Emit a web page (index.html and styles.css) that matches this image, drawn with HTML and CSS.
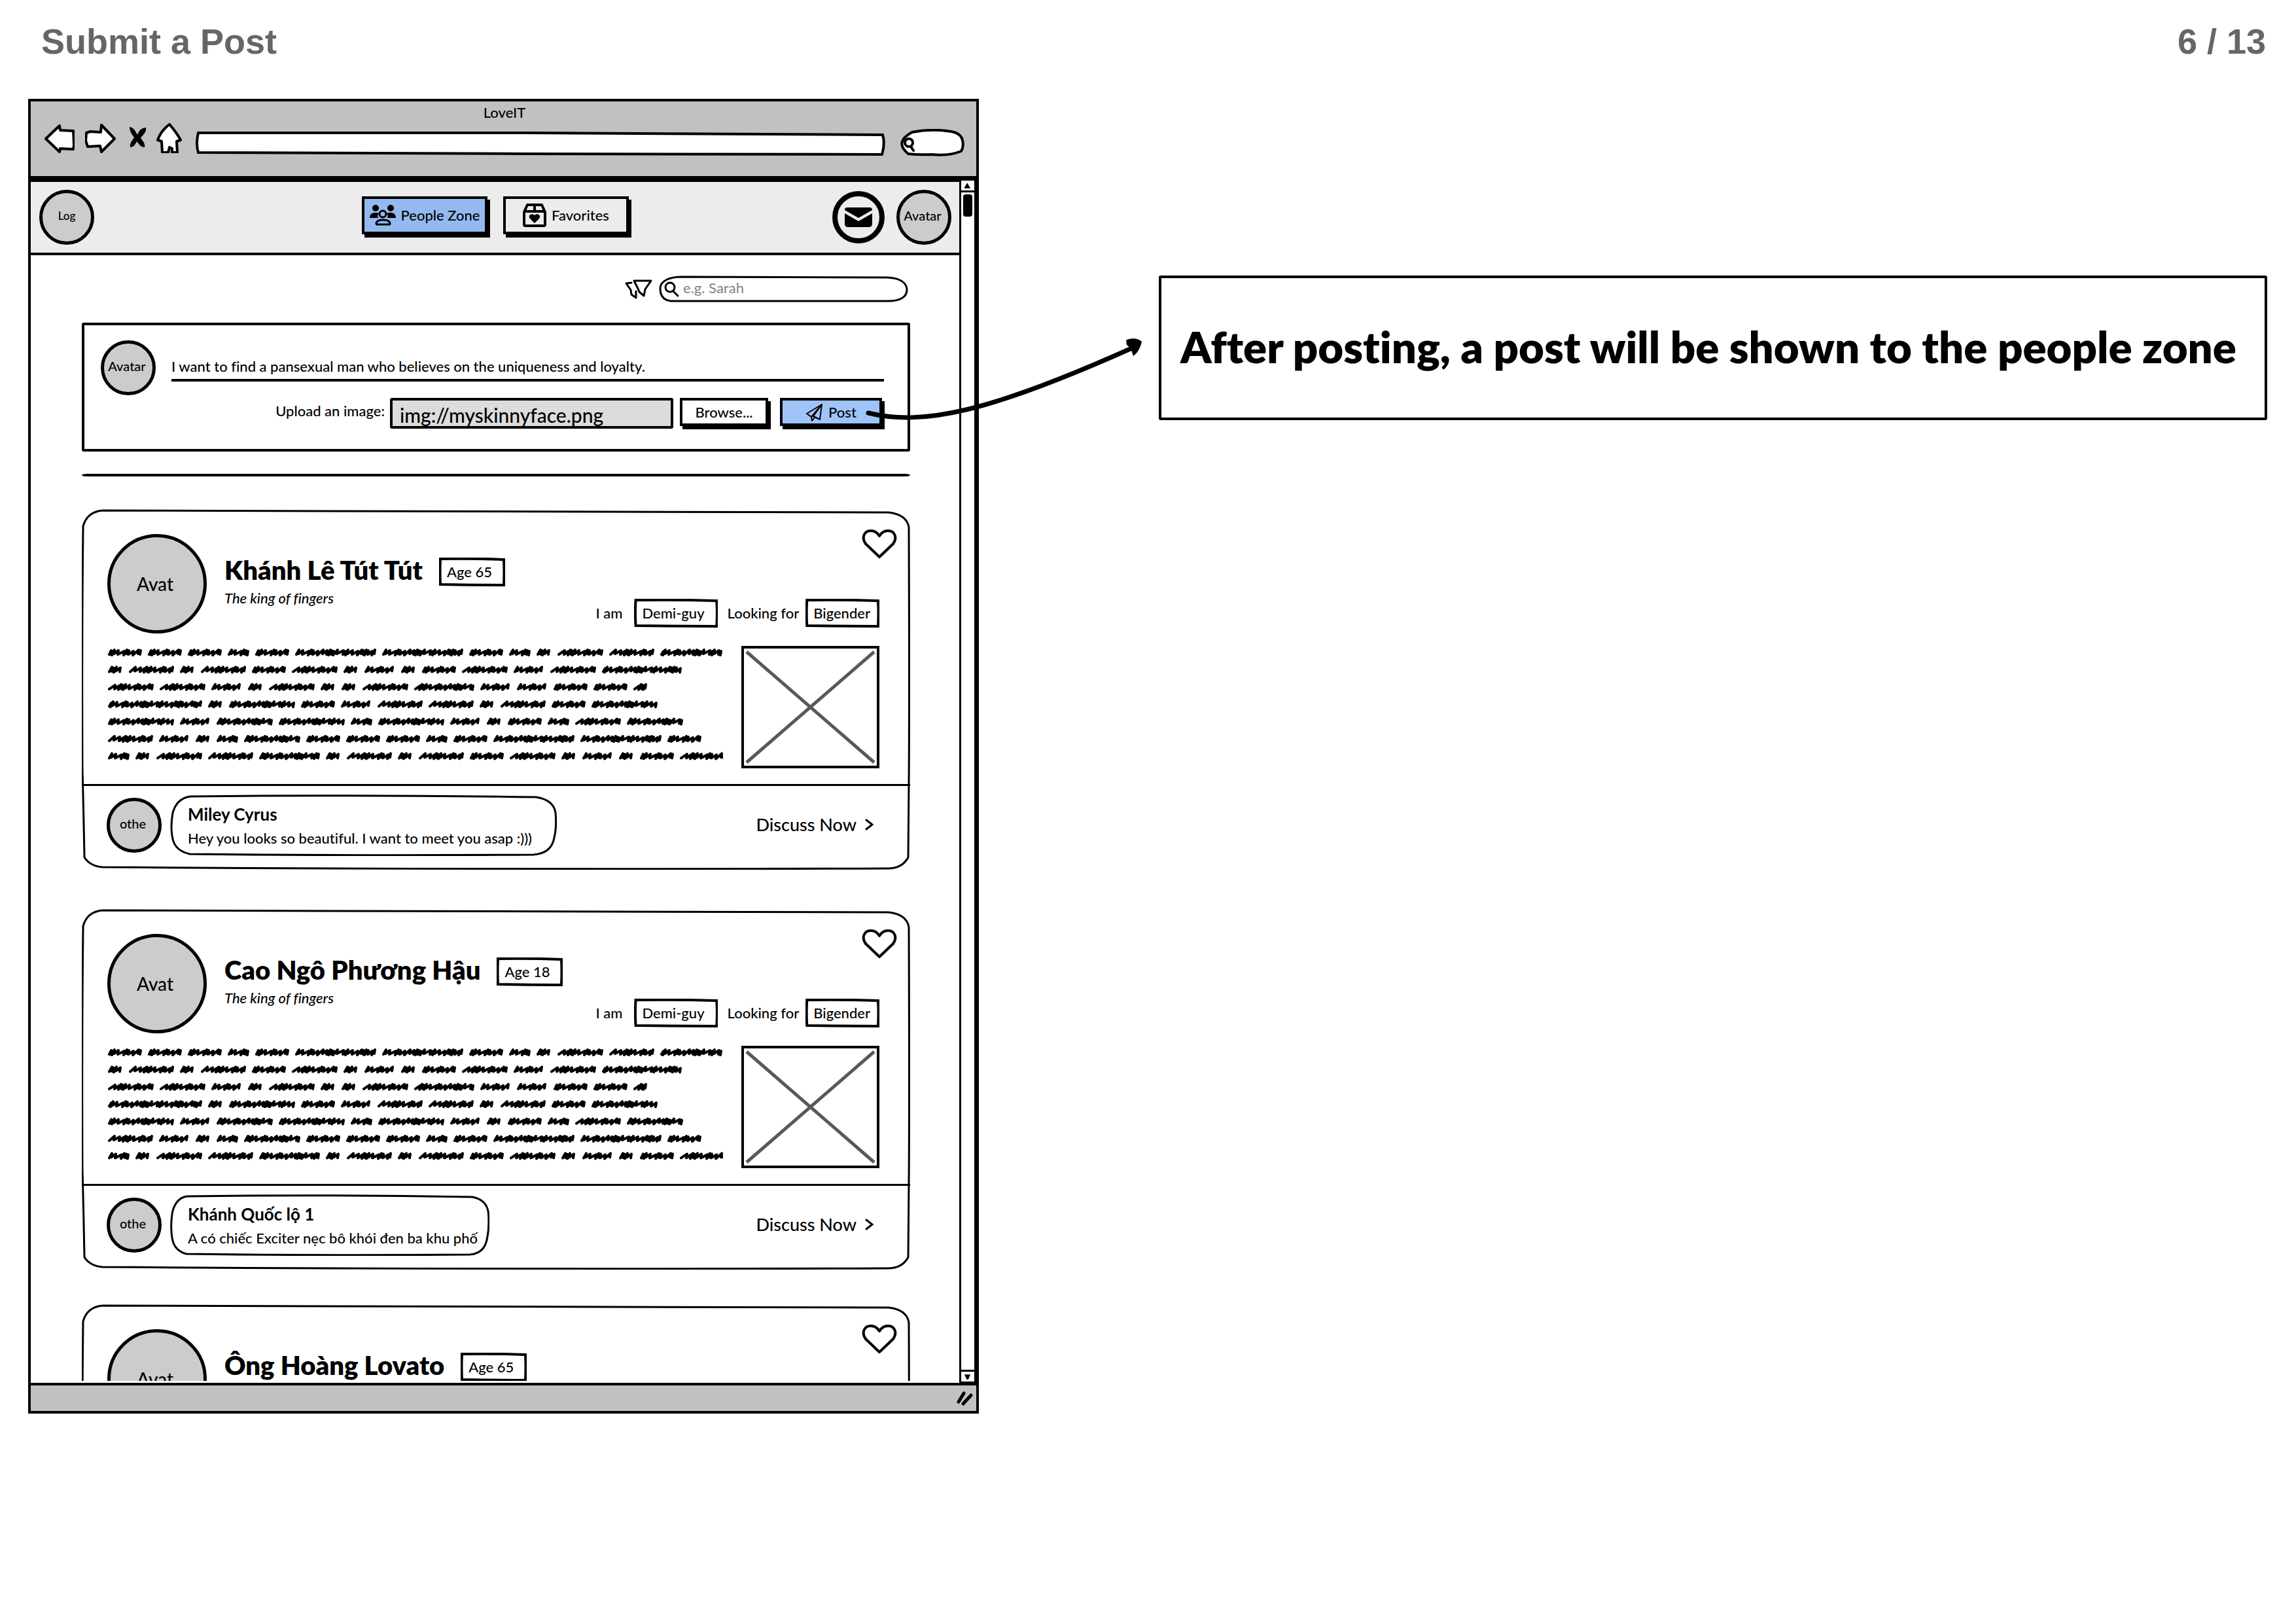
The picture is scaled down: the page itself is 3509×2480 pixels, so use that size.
FILE: index.html
```html
<!DOCTYPE html>
<html lang="en">
<head>
<meta charset="utf-8">
<title>Submit a Post</title>
<link rel="stylesheet" href="styles.css">
</head>
<body>
<svg class="defs" aria-hidden="true">
  <symbol id="heart" viewBox="0 0 54 47"><path d="M27 43 6 23C-1 13 4 3 14 3c6 0 10 3 13 8 3-5 7-8 13-8 10 0 15 10 8 20Z" fill="none" stroke="#000" stroke-width="4" stroke-linejoin="round"/></symbol>
  <symbol id="chevron" viewBox="0 0 15 20"><path d="M3 3l9 7-9 7" fill="none" stroke="#000" stroke-width="3" stroke-linecap="round"/></symbol>
  <symbol id="placeholder" viewBox="0 0 211 187"><path d="M2 2h207v183H2Z" fill="#fff" stroke="#000" stroke-width="4"/><path d="M8 9 203 178M203 9 8 178" stroke="#595959" stroke-width="5"/></symbol>
</svg>

<header class="sheet-header">
  <h1>Submit a Post</h1>
  <p>6 / 13</p>
</header>

<main class="board">
  <section class="window">
    <div class="chrome">
      <p class="chrome-title">LoveIT</p>
      <div class="toolbar">
        <div class="toolbar-icons">
          <button type="button" aria-label="Back"><svg width="46" height="46" viewBox="0 0 46 46"><path d="M2 24 23 4l1 7 20 1 1 22-1 6-20-1-1 5Z" fill="#fff" stroke="#000" stroke-width="4" stroke-linejoin="round"/></svg></button>
          <button type="button" aria-label="Forward"><svg width="47" height="46" viewBox="0 0 47 46"><path d="M2 15l6-2 16 1 1-11 20 21-20 20-2-9-19 1-3-9Z" fill="#fff" stroke="#000" stroke-width="4" stroke-linejoin="round"/></svg></button>
          <button type="button" aria-label="Stop"><svg width="30" height="46" viewBox="0 0 30 46"><path d="M5 6c7 1 9 7 12 12 2-6 6-11 13-11 1 7-4 10-8 16 4 5 7 9 6 14-6 0-9-5-12-9-2 5-5 9-10 9-1-6 3-10 6-15C8 17 5 12 5 6Z" fill="#000"/></svg></button>
          <button type="button" aria-label="Home"><svg width="39" height="46" viewBox="0 0 39 46"><path d="M20 2c6 7 13 16 17 24l-6 2 1 17h-8v-6l-4-2-2 8h-9L8 28l-6-2C5 17 12 8 20 2Z" fill="#fff" stroke="#000" stroke-width="4" stroke-linejoin="round"/></svg></button>
        </div>
        <input class="address" type="text" aria-label="Address">
        <input class="quick-search" type="text" aria-label="Web search">
      </div>
    </div>

    <div class="viewport">
      <div class="page">
        <nav class="nav">
          <a class="avatar avatar-logo" href="#home">Log</a>
          <div class="nav-tabs">
            <button class="button button-primary" type="button">
              <svg width="40" height="32" viewBox="0 0 40 32"><circle cx="9" cy="5" r="5"/><circle cx="32" cy="5" r="5"/><path d="M0 20c0-6 4-8 8-8 3 0 5 0 6 1-2 2-2 5-1 7ZM40 20c0-6-4-8-8-8-3 0-5 0-6 1 2 2 2 5 1 7Z"/><circle cx="20" cy="14" r="5" fill="none" stroke="#000" stroke-width="3"/><path d="M10 29c0-5 4-6 10-6s11 1 11 6c0 1-1 1-2 1H11Z" fill="none" stroke="#000" stroke-width="3"/></svg>
              People Zone
            </button>
            <button class="button" type="button">
              <svg width="36" height="36" viewBox="0 0 36 36"><path d="M2 13 7 2h22l5 11v19q0 2-2 2H4q-2 0-2-2ZM2 12h32M18 2v10" fill="none" stroke="#000" stroke-width="4" stroke-linejoin="round"/><path d="M18 30l-7-7c-4-5 3-9 7-5 4-4 11 0 7 5Z"/></svg>
              Favorites
            </button>
          </div>
          <div class="nav-user">
            <button class="mail" type="button" aria-label="Messages"><svg width="42" height="32" viewBox="0 0 42 32"><path d="M0 5q0-4 4-4h34q4 0 4 4L21 17Z"/><path d="M0 10l21 12 21-12v16q0 5-5 5H5q-5 0-5-5Z"/></svg></button>
            <a class="avatar" href="#me">Avatar</a>
          </div>
        </nav>

        <div class="feed">
          <div class="filters">
            <button type="button" aria-label="Filter"><svg width="42" height="30" viewBox="0 0 42 30"><path d="M14 2h26l-9 13-2 10-7-6-2-5Z" fill="#fff" stroke="#000" stroke-width="3" stroke-linejoin="round"/><path d="M10 5 2 6l7 10 1 7 7 5V18" fill="none" stroke="#000" stroke-width="3" stroke-linejoin="round" stroke-linecap="round"/></svg></button>
            <input class="search" type="search" placeholder="e.g. Sarah" aria-label="Search people">
          </div>

          <form class="composer">
            <span class="avatar">Avatar</span>
            <div class="composer-fields">
              <input class="composer-text" type="text" aria-label="Post text" value="I want to find a pansexual man who believes on the uniqueness and loyalty.">
              <div class="upload">
                <label for="image-path">Upload an image:</label>
                <input class="path" id="image-path" type="text" value="img://myskinnyface.png">
                <button class="button button-browse" type="button">Browse...</button>
                <button class="button button-post" type="button">
                  <svg width="27" height="28" viewBox="0 0 27 28"><path d="M25 2 2 16l7 5ZM25 2l-3 23-10-5ZM9 21l1 6 4-5" fill="none" stroke="#000" stroke-width="2" stroke-linejoin="round"/></svg>
                  Post
                </button>
              </div>
            </div>
          </form>

          <hr class="rule">

          <article class="post">
            <button class="like" type="button" aria-label="Like"><svg width="54" height="47"><use href="#heart"/></svg></button>
            <div class="post-body">
              <header class="post-head">
                <span class="avatar avatar-large">Avat</span>
                <div class="person">
                  <div class="person-name"><h2>Khánh Lê Tút Tút</h2><span class="tag">Age 65</span></div>
                  <p class="motto">The king of fingers</p>
                </div>
                <div class="traits">
                  <p class="trait-self">I am <span class="tag">Demi-guy</span></p>
                  <p class="trait-seek">Looking for <span class="tag tag-snug">Bigender</span></p>
                </div>
              </header>
              <div class="post-content">
                <svg class="scribble" viewBox="0 0 941 187"></svg>
                <svg class="picture" width="211" height="187"><use href="#placeholder"/></svg>
              </div>
            </div>
            <footer class="post-foot">
              <span class="avatar">othe</span>
              <div class="bubble bubble-roomy">
                <h3>Miley Cyrus</h3>
                <p>Hey you looks so beautiful. I want to meet you asap :)))</p>
              </div>
              <a class="discuss" href="#discuss">Discuss Now <svg width="15" height="20"><use href="#chevron"/></svg></a>
            </footer>
          </article>

          <article class="post">
            <button class="like" type="button" aria-label="Like"><svg width="54" height="47"><use href="#heart"/></svg></button>
            <div class="post-body">
              <header class="post-head">
                <span class="avatar avatar-large">Avat</span>
                <div class="person">
                  <div class="person-name"><h2>Cao Ngô Phương Hậu</h2><span class="tag">Age 18</span></div>
                  <p class="motto">The king of fingers</p>
                </div>
                <div class="traits">
                  <p class="trait-self">I am <span class="tag">Demi-guy</span></p>
                  <p class="trait-seek">Looking for <span class="tag tag-snug">Bigender</span></p>
                </div>
              </header>
              <div class="post-content">
                <svg class="scribble" viewBox="0 0 941 187"></svg>
                <svg class="picture" width="211" height="187"><use href="#placeholder"/></svg>
              </div>
            </div>
            <footer class="post-foot">
              <span class="avatar">othe</span>
              <div class="bubble">
                <h3>Khánh Quốc lộ 1</h3>
                <p>A có chiếc Exciter nẹc bô khói đen ba khu phố</p>
              </div>
              <a class="discuss" href="#discuss">Discuss Now <svg width="15" height="20"><use href="#chevron"/></svg></a>
            </footer>
          </article>

          <article class="post post-last">
            <button class="like" type="button" aria-label="Like"><svg width="54" height="47"><use href="#heart"/></svg></button>
            <div class="post-body">
              <header class="post-head">
                <span class="avatar avatar-large">Avat</span>
                <div class="person">
                  <div class="person-name"><h2>Ông Hoàng Lovato</h2><span class="tag">Age 65</span></div>
                </div>
              </header>
            </div>
          </article>
        </div>
      </div>

      <div class="scrollbar" aria-hidden="true">
        <svg class="scroll-end" width="20" height="18" viewBox="0 0 20 18"><path d="M3 14 9 4l6 10Z"/></svg>
        <div class="scroll-track"><div class="scroll-thumb"></div></div>
        <svg class="scroll-end scroll-down" width="20" height="18" viewBox="0 0 20 18"><path d="M4 5h11L11 14H8Z"/></svg>
      </div>
    </div>

    <div class="statusbar">
      <svg width="28" height="24" viewBox="0 0 28 24"><path d="M4 17 12 4M11 20 23 7" stroke="#000" stroke-width="5" stroke-linecap="round"/></svg>
    </div>
  </section>

  <aside class="callout"><p>After posting, a post will be shown to the people zone</p></aside>

  <svg class="connector" width="430" height="132" viewBox="0 0 430 132" aria-hidden="true"><path d="M8 115C90 135 190 115 413 15" fill="none" stroke="#000" stroke-width="7" stroke-linecap="round"/><path d="M426 6c-6-6-18-6-24-2l1 7 6 5 4 12c7-5 11-13 13-22Z"/></svg>
</main>
<script src="scribble.js"></script>
</body>
</html>
```
FILE: styles.css
```css
* {
  box-sizing: border-box;
  margin: 0;
}

body {
  display: flex;
  flex-direction: column;
  height: 100vh;
  padding-bottom: 320px;
  background: #fff;
  color: #000;
  font: 500 22px/26px Lato, "Liberation Sans", sans-serif;
  font-variant-ligatures: none;
}

button,
input {
  padding: 0;
  border: 0;
  background: none;
  color: inherit;
  font: inherit;
}

input {
  outline: 0;
  min-width: 0;
}

a {
  color: inherit;
  text-decoration: none;
}

svg {
  display: block;
  flex: none;
}

.defs {
  position: absolute;
  width: 0;
  height: 0;
}

/* Sheet */

.sheet-header {
  display: flex;
  justify-content: space-between;
  height: 151px;
  padding: 32px 46px 0 63px;
  color: #666;
  font: bold 54px/62px "Liberation Sans", Arial, sans-serif;
}

.sheet-header h1 {
  font: inherit;
}

.board {
  position: relative;
  display: grid;
  flex: 1;
  grid-template-columns: 1453fr 1694fr;
  gap: 275px;
  min-height: 0;
  padding: 0 44px 0 43px;
}

/* Browser window */

.window {
  display: flex;
  flex-direction: column;
  min-width: 0;
  min-height: 0;
  border: 4px solid #000;
}

.chrome {
  padding: 4px 18px 30px 21px;
  border-bottom: 4px solid #000;
  background: #c1c1c1;
}

.chrome-title {
  text-align: center;
}

.toolbar {
  display: flex;
  align-items: flex-end;
  gap: 21px;
  padding-top: 3px;
}

.toolbar-icons {
  display: flex;
  gap: 16px;
  padding-bottom: 5px;
}

.address {
  flex: 1;
  height: 38px;
  background: url("data:image/svg+xml,%3Csvg xmlns='http://www.w3.org/2000/svg' viewBox='0 0 1054 38' preserveAspectRatio='none'%3E%3Cpath d='M4 2 L500 2 L1050 5 Q1054 18 1049 35 L500 34 L4 32 Q0 18 4 2Z' fill='white' stroke='black' stroke-width='4'/%3E%3C/svg%3E") 0 0 / 100% 100% no-repeat;
}

.quick-search {
  width: 100px;
  height: 42px;
  background: url("data:image/svg+xml,%3Csvg xmlns='http://www.w3.org/2000/svg' viewBox='0 0 100 42'%3E%3Cpath d='M20 5 Q50 -1 80 4 Q92 6 96 14 Q100 26 95 34 Q75 42 50 39 Q30 40 14 38 Q-8 20 20 5Z' fill='white' stroke='black' stroke-width='4'/%3E%3Ccircle cx='15' cy='21' r='6' fill='none' stroke='black' stroke-width='4'/%3E%3Cpath d='M18 27 L22 33' stroke='black' stroke-width='4' stroke-linecap='round'/%3E%3C/svg%3E") 0 0 / 100% 100% no-repeat;
}

.viewport {
  display: flex;
  flex: 1;
  min-height: 0;
}

.page {
  flex: 1;
  min-width: 0;
  overflow: hidden;
  border-bottom: 3px solid #fff;
}

.scrollbar {
  display: flex;
  flex-direction: column;
  width: 26px;
  border: 3px solid #000;
  border-bottom-width: 2px;
}

.scroll-end {
  border-bottom: 3px solid #000;
}

.scroll-down {
  border-top: 3px solid #000;
  border-bottom: 0;
}

.scroll-track {
  flex: 1;
  padding: 3px;
}

.scroll-thumb {
  height: 34px;
  border-radius: 4px;
  background: #000;
}

.statusbar {
  display: flex;
  align-items: center;
  justify-content: flex-end;
  height: 43px;
  padding-right: 3px;
  border-top: 4px solid #000;
  background: #c1c1c1;
}

/* Shared pieces */

.avatar {
  display: flex;
  flex: none;
  align-items: center;
  justify-content: center;
  width: 84px;
  height: 84px;
  padding: 0 4px 6px 0;
  border: 5px solid #000;
  border-radius: 50%;
  background: #ccc;
  font-size: 20px;
}

.avatar-logo {
  padding: 0 0 4px;
  font-size: 17px;
}

.avatar-large {
  width: 152px;
  height: 152px;
  padding: 0 6px 0 0;
  font-size: 28px;
}

.button {
  display: flex;
  align-items: center;
  justify-content: center;
  gap: 8px;
  border: 4px solid #000;
  box-shadow: 4px 5px 0 #000;
}

.tag {
  display: inline-block;
  padding: 9px 20px 9px 12px;
  background: url("data:image/svg+xml,%3Csvg xmlns='http://www.w3.org/2000/svg' viewBox='0 0 100 44' preserveAspectRatio='none'%3E%3Cpath vector-effect='non-scaling-stroke' d='M2 2 Q50 1 98 3 Q99 22 98 42 Q50 42 2 41 Q1 20 2 2Z' fill='white' stroke='black' stroke-width='4'/%3E%3C/svg%3E") 0 0 / 100% 100% no-repeat;
}

.tag-snug {
  padding-right: 14px;
}

/* Site navigation */

.nav {
  display: grid;
  grid-template-columns: 1fr auto 1fr;
  align-items: center;
  height: 117px;
  padding: 0 12px 0 13px;
  border: solid #000;
  border-width: 5px 0 4px;
  background: #ececec;
}

.nav-tabs {
  display: grid;
  grid-template-columns: 1fr 1fr;
  gap: 24px;
}

.nav-tabs .button {
  height: 58px;
  min-width: 192px;
  margin-bottom: 6px;
}

.nav .button-primary {
  background: #94b9f1;
}

.nav-user {
  display: flex;
  align-items: center;
  justify-content: flex-end;
  gap: 18px;
}

.mail {
  display: flex;
  align-items: center;
  justify-content: center;
  width: 80px;
  height: 80px;
  border: 8px solid #000;
  border-radius: 50%;
}

/* Feed */

.feed {
  padding: 31px 75px 0 78px;
}

.filters {
  display: flex;
  align-items: center;
  justify-content: flex-end;
  gap: 10px;
  padding-right: 3px;
}

.search {
  width: 381px;
  height: 41px;
  padding: 0 20px 4px 37px;
  appearance: none;
  background: url("data:image/svg+xml,%3Csvg xmlns='http://www.w3.org/2000/svg' viewBox='0 0 381 41'%3E%3Cpath d='M36 2 L350 3 C370 4 379 12 379 22 C379 32 370 39 350 39 L22 39 C8 39 2 32 2 20 C2 8 16 2 36 2Z' fill='white' stroke='black' stroke-width='3'/%3E%3Ccircle cx='17' cy='18' r='7' fill='none' stroke='black' stroke-width='3'/%3E%3Cpath d='M22 24 L29 31' stroke='black' stroke-width='3' stroke-linecap='round'/%3E%3C/svg%3E") 0 0 / 100% 100% no-repeat;
}

.search::placeholder {
  color: #8a8a94;
  opacity: 1;
}

.composer {
  display: flex;
  gap: 24px;
  margin-top: 31px;
  padding: 23px 36px 31px 25px;
  border: 4px solid #000;
  border-radius: 3px;
}

.composer-fields {
  flex: 1;
  min-width: 0;
  padding-top: 20px;
}

.composer-text {
  width: 100%;
  height: 43px;
  border-bottom: 4px solid #000;
}

.upload {
  display: flex;
  align-items: flex-start;
  justify-content: flex-end;
  margin-top: 25px;
  padding-right: 3px;
}

.upload label {
  padding-top: 7px;
}

.path {
  width: 433px;
  height: 47px;
  margin: 0 10px 0 8px;
  padding: 4px 11px 0;
  border: 4px solid #000;
  border-radius: 3px;
  background: #dcdcdc;
  font-size: 30px;
}

.upload .button {
  height: 43px;
}

.button-browse {
  width: 135px;
  margin-right: 18px;
}

.button-post {
  width: 156px;
  background: #9fc4f8;
}

.rule {
  height: 4px;
  margin: 34px 0 50px;
  border: 0;
  border-radius: 8px / 2px;
  background: #000;
}

/* Posts */

.post {
  position: relative;
  margin-bottom: 60px;
  background: url("data:image/svg+xml,%3Csvg xmlns='http://www.w3.org/2000/svg' viewBox='0 0 1264 551' preserveAspectRatio='none'%3E%3Cpath vector-effect='non-scaling-stroke' d='M32 2 Q600 1 1231 5 Q1259 8 1262 28 Q1263 300 1262 420 L1261 532 Q1252 549 1230 549 Q600 551 31 547 Q12 545 4 532 Q2 430 1 400 Q0 200 2 26 Q8 4 32 2Z' fill='white' stroke='black' stroke-width='3'/%3E%3C/svg%3E") 0 0 / 100% 100% no-repeat;
}

.post-last {
  min-height: 551px;
  margin-top: -7px;
}

.like {
  position: absolute;
  top: 30px;
  right: 20px;
}

.post-body {
  padding: 38px 47px 24px 39px;
}

.post-head {
  display: flex;
  align-items: flex-start;
  justify-content: space-between;
}

.person {
  flex: 1;
  padding: 31px 0 0 27px;
}

.person-name {
  display: flex;
  align-items: flex-start;
  gap: 25px;
}

.person-name h2 {
  font-size: 40px;
  font-weight: 800;
  line-height: 48px;
}

.person-name .tag {
  margin-top: 5px;
}

.motto {
  margin-top: 5px;
  font-style: italic;
}

.traits {
  display: flex;
  align-self: flex-end;
  gap: 15px;
  padding-bottom: 9px;
}

.traits p {
  display: flex;
  align-items: center;
}

.trait-self {
  gap: 18px;
}

.trait-seek {
  gap: 10px;
}

.post-content {
  display: flex;
  gap: 28px;
  padding-top: 19px;
}

.scribble {
  flex: 1;
  min-width: 0;
}

.post-foot {
  display: flex;
  align-items: center;
  gap: 13px;
  padding: 13px 55px 21px 38px;
  border-top: 3px solid #000;
}

.bubble {
  padding: 15px 18px 14px 27px;
  background: url("data:image/svg+xml,%3Csvg xmlns='http://www.w3.org/2000/svg' viewBox='0 0 592 94' preserveAspectRatio='none'%3E%3Cpath vector-effect='non-scaling-stroke' d='M31 3 Q300 0 560 4 Q587 8 590 28 Q592 50 588 66 Q584 90 556 92 Q300 94 30 91 Q8 86 4 68 Q0 50 4 28 Q10 6 31 3Z' fill='white' stroke='black' stroke-width='3'/%3E%3C/svg%3E") 0 0 / 100% 100% no-repeat;
}

.bubble-roomy {
  padding-right: 38px;
}

.bubble h3 {
  margin-bottom: 8px;
  font-size: 26px;
  line-height: 31px;
}

.discuss {
  display: flex;
  align-items: center;
  gap: 12px;
  margin-left: auto;
  padding-bottom: 2px;
  font-size: 27px;
  line-height: 32px;
}

/* Note beside the window */

.callout {
  align-self: start;
  display: flex;
  align-items: center;
  height: 221px;
  margin-top: 270px;
  padding: 0 29px 6px;
  border: 4px solid #000;
  border-radius: 3px;
  font-size: 67px;
  font-weight: 800;
  line-height: 80px;
  white-space: nowrap;
}

.connector {
  position: absolute;
  top: 365px;
  left: 1319px;
}
```
FILE: scribble.js
```
// Word widths of the filler paragraph, line by line.
const LINES = [
  [53, 53, 53, 34, 53, 125, 125, 53, 34, 24, 71, 70, 96],
  [24, 70, 24, 70, 53, 71, 24, 48, 24, 53, 71, 48, 71, 124],
  [71, 71, 48, 24, 71, 24, 24, 71, 93, 48, 48, 53, 53, 23],
  [145, 24, 102, 53, 48, 70, 70, 24, 70, 53, 102],
  [102, 48, 87, 102, 34, 102, 48, 24, 53, 34, 71, 87],
  [70, 48, 24, 34, 87, 53, 53, 53, 34, 53, 125, 125, 53],
  [34, 24, 71, 70, 94, 24, 70, 24, 70, 53, 71, 24, 48, 24, 53, 71],
];
const GAP = 8;
const LINE_HEIGHT = 26.4;
const STEPS = [8, 9, 7, 4, 3, 3, 4, 7, 10, 5, 4];

function word(x, y, width) {
  const end = x + width - 2;
  let d = `M${x + 3} ${y + 3}`;
  let cx = x + 3;
  for (let i = width % 7; cx < end - 3; i++) {
    const next = Math.min(cx + STEPS[i % STEPS.length], end);
    const dip = i % 3;
    d += `L${next} ${y - 4 + dip}L${next - 1} ${y + 2 + dip}`;
    cx = next - 1;
  }
  return d;
}

function paragraph() {
  return LINES.map((widths, row) => {
    let x = 0;
    return widths.map((w) => {
      const d = word(x, 10 + row * LINE_HEIGHT, w);
      x += w + GAP;
      return d;
    }).join("");
  }).join("");
}

document.querySelectorAll(".scribble").forEach((svg) => {
  svg.innerHTML = `<path d="${paragraph()}" fill="none" stroke="#000" stroke-width="4" stroke-linecap="round" stroke-linejoin="round"/>`;
});
```
